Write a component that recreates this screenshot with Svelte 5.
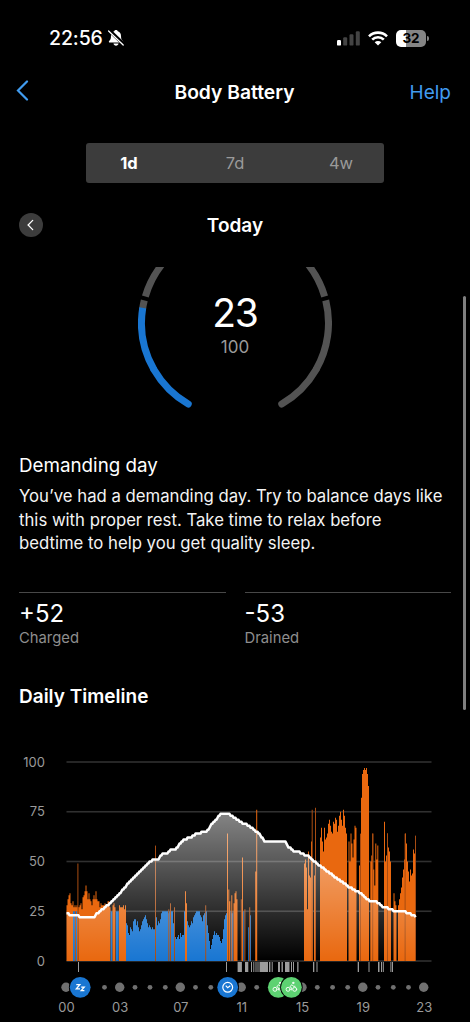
<script lang="ts">
	const ranges = ['1d', '7d', '4w'];
	let selected = '1d';

	const stats = [
		{ value: '+52', label: 'Charged' },
		{ value: '-53', label: 'Drained' }
	];

	// chart space: 470 wide, 0..100 goes from BASE up to TOP
	const BASE = 221;
	const TOP = 22;
	const y = (v: number) => BASE - (v * (BASE - TOP)) / 100;
	const levels = [100, 75, 50, 25, 0];

	// body battery curve, [x, level]
	const curve = [
		[66.5, 24], [71, 23], [80, 22.4], [82, 22], [94, 22], [96, 23.5], [100, 25], [105, 27], [110, 29],
		[115, 31.5], [120, 34], [125, 37], [130, 40], [135, 42.5], [140, 45], [145, 47.5], [150, 50],
		[155, 51], [159, 51], [161, 53], [164, 54], [168, 54.5], [170, 55.5], [175, 55.5], [180, 59],
		[184, 61], [190, 62], [197, 64], [206, 65], [208, 66], [212, 69], [217, 71.5], [220, 73.5],
		[223, 74.2], [227, 74.2], [233, 72.6], [240, 70], [247, 68.5], [254, 66], [258, 64.5],
		[262, 62], [265, 60], [285, 60], [288, 57.5], [293, 55.5], [298, 55], [302, 53.8], [308, 52.8],
		[312, 51], [317, 49], [325, 46], [332, 43.4], [338, 41], [343, 39.7], [348, 37.5], [357, 35],
		[361, 34], [365, 32], [370, 30], [377, 29.6], [382, 27.4], [388, 26.6], [394, 25.2], [404, 24.8],
		[409, 23.8], [412, 23.2], [415.5, 22.4]
	];

	function levelAt(x: number) {
		let i = 1;
		while (i < curve.length - 1 && curve[i][0] < x) i++;
		const [x0, v0] = curve[i - 1];
		const [x1, v1] = curve[i];
		return v0 + ((v1 - v0) * (x - x0)) / (x1 - x0);
	}

	let line = '';
	for (let x = 66.5; x <= 415.5; x++) {
		line += (line ? ' L' : 'M') + x + ' ' + y(Math.round(levelAt(x))).toFixed(1);
	}
	const area = line + ' L415.5 ' + BASE + ' L66.5 ' + BASE + 'Z';

	// stress / rest bars, every value is one pixel wide
	const runs = [
		{ x: 66.5, kind: 'stress', v: [28, 31, 33, 34, 29, 28, 30, 27, 28, 27, 28, 27] },
		{ x: 73, kind: 'rest', v: [25, 25] },
		{ x: 76, kind: 'rest', v: [25] },
		{ x: 78.5, kind: 'stress', v: [27, 28, 29, 26, 32, 33, 35, 38, 35, 31, 34, 31, 30, 28, 31, 33, 31, 35, 31, 30, 30, 27, 29, 28, 28, 28, 29, 27, 28, 30, 30, 27] },
		{ x: 110.6, kind: 'rest', v: [25, 25] },
		{ x: 112.5, kind: 'stress', v: [28, 29, 27] },
		{ x: 115.8, kind: 'rest', v: [25, 25, 25] },
		{ x: 119, kind: 'stress', v: [28, 27, 27, 27, 28, 26, 28] },
		{ x: 126, kind: 'rest', v: [19, 18, 14, 13, 17, 16, 15, 20, 21, 21, 18, 20, 17, 15, 16, 18, 20, 21, 22, 23, 21, 19, 17, 18, 17, 16, 17, 16, 16, 22, 22, 18, 20, 19, 21, 24, 25, 25, 25, 25, 25, 25, 24, 25, 25, 25, 25, 19, 14, 12, 11, 12, 13, 11, 14, 12, 13, 13, 14, 12] },
		{ x: 184, kind: 'rest', v: [25] },
		{ x: 186, kind: 'rest', v: [22, 20, 18, 17, 18, 20, 19, 22, 23, 24, 25, 25, 25, 25, 23, 22, 20, 23, 24, 25, 25, 18, 14, 10, 6, 8, 11, 13, 15, 13, 14, 13, 13, 12, 10, 9, 11, 16, 21, 23, 24] },
		{ x: 230.5, kind: 'rest', v: [25, 24, 25] },
		{ x: 243.3, kind: 'rest', v: [25] },
		{ x: 248.2, kind: 'rest', v: [17] },
		{ x: 250, kind: 'rest', v: [23] },
		{ x: 185, kind: 'stress', v: [35, 29] },
		{ x: 227, kind: 'stress', v: [64] },
		{ x: 228.3, kind: 'stress', v: [36, 30] },
		{ x: 231.3, kind: 'stress', v: [33] },
		{ x: 233.5, kind: 'stress', v: [29, 34, 35, 31] },
		{ x: 242, kind: 'stress', v: [52] },
		{ x: 255.2, kind: 'stress', v: [45, 76] },
		{ x: 304, kind: 'stress', v: [49, 51, 47, 26, 55, 43, 42, 60, 50] },
		{ x: 314, kind: 'stress', v: [43, 51] },
		{ x: 320, kind: 'stress', v: [62, 67, 60, 55, 67, 61, 62, 64, 69, 71, 68, 65, 64, 70, 69, 72, 71, 65, 68, 73, 75, 71, 68, 76, 73, 67, 64] },
		{ x: 348.5, kind: 'stress', v: [60, 50, 64, 59, 52, 61, 68, 67] },
		{ x: 359, kind: 'stress', v: [48] },
		{ x: 361, kind: 'stress', v: [82, 94, 96, 97, 96, 97, 94, 88] },
		{ x: 370.3, kind: 'stress', v: [50, 53, 64, 46, 38, 59, 51, 58] },
		{ x: 384, kind: 'stress', v: [70, 50, 53, 64, 57, 55, 50] },
		{ x: 393.5, kind: 'stress', v: [34, 30, 28] },
		{ x: 398, kind: 'stress', v: [28, 31, 34, 37, 42, 46, 51, 64, 59, 50, 45, 40, 46, 43, 44, 56, 54, 50] }
	];

	// short isolated samples, drawn thinner and dimmer
	const spikes = [
		[74.8, 25], [77.4, 49], [155, 58], [168.3, 26], [170, 29], [174, 27], [205.2, 28], [240.8, 31],
		[244.4, 26], [249.2, 27], [311.7, 76], [315, 77], [360, 64], [372.2, 64], [387, 64], [404.6, 64],
		[415, 63]
	];

	function barPath(x: number, values: number[]) {
		let d = 'M' + x + ' ' + BASE;
		values.forEach((v, i) => {
			d += 'V' + y(v).toFixed(1) + 'H' + (x + i + 1).toFixed(1);
		});
		return d + 'V' + BASE + 'Z';
	}

	// activity marks below the axis, [x, width]
	const marks = [
		[78, 1], [226, 1], [237.6, 4.3], [245, 3.3], [251, 1], [253.3, 1], [255.5, 1], [257.5, 1],
		[259.5, 8.5], [269, 1.4], [271.7, 1], [278, 2], [281.5, 1.4], [285, 4.5], [291, 1], [293, 1],
		[297.2, 1.3], [313, 1.3], [316.5, 1], [357.7, 1.3], [368.5, 1], [378, 1.5], [381, 1], [382.8, 1],
		[390.4, 1], [392, 1]
	];

	const hours = [
		{ x: 66, label: '00' },
		{ x: 119.7, label: '03' },
		{ x: 180.3, label: '07' },
		{ x: 241.2, label: '11' },
		{ x: 302, label: '15' },
		{ x: 362.8, label: '19' },
		{ x: 423.7, label: '23' }
	];
	const smallDots = [
		104.5, 135, 150, 165.3, 195.5, 210.8, 226, 256.7, 272, 287, 317.3, 332.6, 347.7, 378, 393.3, 408.5
	];

	// gauge arcs, degrees measured clockwise from the right
	function arc(from: number, to: number) {
		const p = (a: number) => {
			const r = (a * Math.PI) / 180;
			return (97 + 93.5 * Math.cos(r)).toFixed(2) + ' ' + (56 + 93.5 * Math.sin(r)).toFixed(2);
		};
		return 'M' + p(from) + ' A93.5 93.5 0 0 1 ' + p(to);
	}
</script>

{#snippet bike()}
	<g fill="none" stroke="#fff" stroke-width="0.9" stroke-linecap="round" stroke-linejoin="round">
		<circle cx="-3.3" cy="2" r="2" />
		<circle cx="3.3" cy="2" r="2" />
		<path d="M0.2 2.6 L0.4 0.7 L-1.6 -0.6 L0.6 -2.6 L2 -1 L3.6 -1" />
		<circle cx="1.8" cy="-4.4" r="0.7" fill="#fff" />
	</g>
{/snippet}

<div class="screen">
	<div class="status">
		<span class="time">22:56</span>
		<svg class="bell" width="18" height="18" viewBox="0 0 18 18">
			<path
				d="M9 1c1 0 1.700.6 1.800 1.300 2.100.8 3.200 2.500 3.200 4.600 0 2.900.6 3.800 1.800 5 .7.7.3 1.700-.6 1.700H2.800c-.9 0-1.300-1-.6-1.700C3.400 10.700 4 9.800 4 6.900c0-2.100 1.100-3.800 3.200-4.600C7.300 1.600 8 1 9 1z"
				fill="#fff"
			/>
			<path d="M6.500 14.500h5c-.2 1.400-1.200 2.200-2.500 2.200s-2.300-.8-2.500-2.200z" fill="#fff" />
			<path d="M2.200 1.400L17.400 15.900" stroke="#000" stroke-width="3.600" />
			<path d="M1.600 2L16.200 16" stroke="#fff" stroke-width="1.300" stroke-linecap="round" />
		</svg>
		<svg class="signal" width="23" height="15" viewBox="0 0 23 15">
			<rect x="0" y="9" width="4" height="5.6" rx="1.200" fill="#fff" />
			<rect x="6.2" y="6.3" width="4" height="8.3" rx="1.200" fill="#434343" />
			<rect x="12.5" y="3.3" width="4" height="11.3" rx="1.200" fill="#434343" />
			<rect x="18.800" y="0.3" width="4" height="14.3" rx="1.200" fill="#434343" />
		</svg>
		<svg class="wifi" width="20" height="15" viewBox="0 0 20 15">
			<g fill="none" stroke="#fff" stroke-width="2.6">
				<path d="M1 5.300a12.800 12.800 0 0 1 18 0" />
				<path d="M4.200 8.700a8.200 8.200 0 0 1 11.600 0" />
			</g>
			<path d="M10 14.500L6.700 11.300a4.700 4.700 0 0 1 6.600 0z" fill="#fff" />
		</svg>
		<div class="battery"><span>32</span></div>
		<i class="nub"></i>
	</div>

	<header>
		<svg width="13" height="21" viewBox="0 0 13 21">
			<path d="M11 1.500L2 10.500L11 19.500" fill="none" stroke="#419cf0" stroke-width="2.2" stroke-linecap="round" />
		</svg>
		<h1>Body Battery</h1>
		<a href="#help">Help</a>
	</header>

	<div class="tabs">
		{#each ranges as range}
			<button class:active={selected === range} on:click={() => (selected = range)}>{range}</button>
		{/each}
	</div>

	<div class="day">
		<button class="prev" aria-label="Previous day">
			<svg width="8" height="12" viewBox="0 0 8 12">
				<path d="M5.700 1.400L1.100 6L5.700 10.600" fill="none" stroke="#fff" stroke-width="1.300" stroke-linecap="round" />
			</svg>
		</button>
		<h2>Today</h2>
	</div>

	<div class="gauge">
		<svg width="194" height="145" viewBox="0 0 194 145">
			<g fill="none" stroke="#535353" stroke-width="7">
				<path d={arc(196.5, 240)} />
				<path d={arc(300, 343.5)} />
				<path d={arc(188, 194)} />
				<path d={arc(-14, 30)} />
				<path d={arc(30, 60)} stroke-linecap="round" />
				<path d={arc(150, 189.3)} stroke="#1976d2" />
				<path d={arc(120, 150)} stroke="#1976d2" stroke-linecap="round" />
			</g>
		</svg>
		<div class="score">
			<strong>23</strong>
			<span>100</span>
		</div>
	</div>

	<section class="summary">
		<h3>Demanding day</h3>
		<p>
			You’ve had a demanding day. Try to balance days like<br />
			this with proper rest. Take time to relax before<br />
			bedtime to help you get quality sleep.
		</p>
	</section>

	<div class="stats">
		{#each stats as stat}
			<div class="stat">
				<b>{stat.value}</b>
				<span>{stat.label}</span>
			</div>
		{/each}
	</div>

	<h2 class="timeline-title">Daily Timeline</h2>

	<svg class="chart" width="470" height="282" viewBox="0 0 470 282">
		<defs>
			<linearGradient id="fade" gradientUnits="userSpaceOnUse" x1="0" y1="73" x2="0" y2="221">
				<stop offset="0" stop-color="#fff" stop-opacity="0.52" />
				<stop offset="1" stop-color="#fff" stop-opacity="0" />
			</linearGradient>
		</defs>

		{#each levels as level}
			<rect x="66.5" y={y(level) - 0.8} width="365" height="1.6" fill="#303030" />
			<text class="level" x="45" y={y(level) + 4.6}>{level}</text>
		{/each}

		{#each runs as run}
			<path d={barPath(run.x, run.v)} class={run.kind} />
		{/each}
		{#each spikes as [x, v]}
			<rect {x} y={y(v)} width="1" height={BASE - y(v)} fill="#a84c12" />
		{/each}

		<path d={area} fill="url(#fade)" />
		<path d={line} fill="none" stroke="#fff" stroke-width="2.5" stroke-linejoin="round" />

		{#each marks as [x, w]}
			<rect {x} y="222" width={w} height="10" fill="#9c9c9c" />
		{/each}

		{#each hours as hour}
			<circle cx={hour.x} cy="247.3" r="4.7" fill="#707070" />
			<text class="hour" x={hour.x + 0.5} y="271.5">{hour.label}</text>
		{/each}
		{#each smallDots as x}
			<circle cx={x} cy="247.3" r="2.4" fill="#707070" />
		{/each}

		<g transform="translate(80.2 247.3)">
			<circle r="11.3" fill="#000" />
			<circle r="10.4" fill="#1976d2" />
			<path
				d="M-3.900 -2.700H-0.400L-3.900 1.500H-0.200M1 -0.200H4L1 3.300H4.200"
				fill="none"
				stroke="#fff"
				stroke-width="1.3"
			/>
		</g>
		<g transform="translate(227.7 247.3)">
			<circle r="11.3" fill="#000" />
			<circle r="10.4" fill="#1976d2" />
			<circle r="4.9" fill="none" stroke="#fff" stroke-width="1.2" />
			<path d="M-2 -1.700L0 0.400L2.600 -1.500" fill="none" stroke="#fff" stroke-width="1.1" />
		</g>
		{#each [278.3, 291.4] as x}
			<g transform="translate({x} 247.3)">
				<circle r="11.3" fill="#000" />
				<circle r="10.4" fill="#5dd272" />
				{@render bike()}
			</g>
		{/each}
	</svg>

	<div class="scrollbar"></div>
</div>

<style>
	:global(body) {
		background: #000;
	}

	.screen {
		position: relative;
		width: 470px;
		height: 1022px;
		overflow: hidden;
		background: #000;
		color: #fff;
		font-family: Inter, 'Liberation Sans', sans-serif;
	}

	h1,
	h2,
	h3,
	p {
		margin: 0;
		font-weight: 400;
	}

	button {
		border: 0;
		padding: 0;
		font: inherit;
		color: inherit;
	}

	.status {
		display: flex;
		align-items: center;
		height: 76px;
		padding-left: 49px;
	}

	.time {
		width: 58px;
		font-size: 19.5px;
		font-weight: 500;
		letter-spacing: -0.1px;
	}

	.signal {
		margin-left: 212px;
	}

	.wifi {
		margin-left: 8px;
	}

	.battery {
		width: 30px;
		height: 17px;
		margin-left: 8px;
		border-radius: 5px;
		background: linear-gradient(90deg, #fff 33%, #858585 33%);
		color: #000;
		font-size: 13.5px;
		font-weight: 700;
		line-height: 17px;
		text-align: center;
	}

	.nub {
		width: 2px;
		height: 5px;
		margin-left: 1px;
		border-radius: 0 2px 2px 0;
		background: #858585;
	}

	header {
		display: grid;
		grid-template-columns: 100px 1fr 100px;
		align-items: center;
		height: 32px;
		padding: 0 19px 0 16px;
	}

	header svg {
		margin-top: -4px;
	}

	h1 {
		padding-left: 2px;
		font-size: 19.3px;
		font-weight: 600;
		text-align: center;
	}

	a {
		color: #419cf0;
		font-size: 19px;
		text-align: right;
		text-decoration: none;
	}

	.tabs {
		display: grid;
		grid-template-columns: 86px 1fr 86px;
		width: 298px;
		height: 40px;
		margin: 35px 0 0 86px;
		border-radius: 3px;
		background: #3c3c3c;
	}

	.tabs button {
		background: none;
		color: #9a9a9a;
		font-size: 16.5px;
	}

	.tabs .active {
		color: #fff;
		font-weight: 700;
	}

	.day {
		display: grid;
		grid-template-columns: 24px 1fr 24px;
		align-items: center;
		height: 24px;
		margin: 30px 19px 0;
	}

	.prev {
		display: grid;
		place-items: center;
		width: 24px;
		height: 24px;
		border-radius: 50%;
		background: #3c3c3c;
	}

	h2 {
		font-size: 19px;
		font-weight: 600;
		text-align: center;
	}

	.gauge {
		display: grid;
		justify-content: center;
		height: 145px;
		margin-top: 30px;
	}

	.gauge svg,
	.score {
		grid-area: 1 / 1;
	}

	.score {
		display: flex;
		flex-direction: column;
		align-items: center;
		padding-top: 24px;
	}

	.score strong {
		font-size: 39px;
		font-weight: 400;
		letter-spacing: -1.3px;
		line-height: 44px;
	}

	.score span {
		margin-top: 1px;
		color: #9a9a9a;
		font-size: 17px;
		line-height: 22px;
	}

	.summary {
		height: 180px;
		padding: 42px 19px 0;
		box-sizing: border-box;
	}

	h3 {
		font-size: 18.8px;
		line-height: 24px;
	}

	p {
		margin-top: 7px;
		color: #f4f4f4;
		font-size: 16.72px;
		line-height: 23.5px;
		white-space: nowrap;
	}

	.stats {
		display: grid;
		grid-template-columns: 1fr 1fr;
		gap: 19px;
		padding: 0 19px;
	}

	.stat {
		display: flex;
		flex-direction: column;
		height: 56px;
		border-top: 1px solid #484848;
	}

	.stat b {
		margin-top: 7px;
		font-size: 24px;
		font-weight: 400;
		line-height: 28px;
	}

	.stat span {
		color: #8e8e8e;
		font-size: 14.8px;
		line-height: 20px;
	}

	.timeline-title {
		margin: 35px 0 0 19px;
		line-height: 26px;
		text-align: left;
	}

	.chart {
		display: block;
		margin-top: 30px;
	}

	.level,
	.hour {
		fill: #9a9a9a;
		font-size: 13px;
	}

	.level {
		text-anchor: end;
	}

	.hour {
		text-anchor: middle;
	}

	.stress {
		fill: #e9680f;
	}

	.rest {
		fill: #1976d2;
	}

	.scrollbar {
		position: absolute;
		top: 296px;
		right: 4px;
		width: 3px;
		height: 414px;
		border-radius: 2px;
		background: #808080;
	}
</style>
